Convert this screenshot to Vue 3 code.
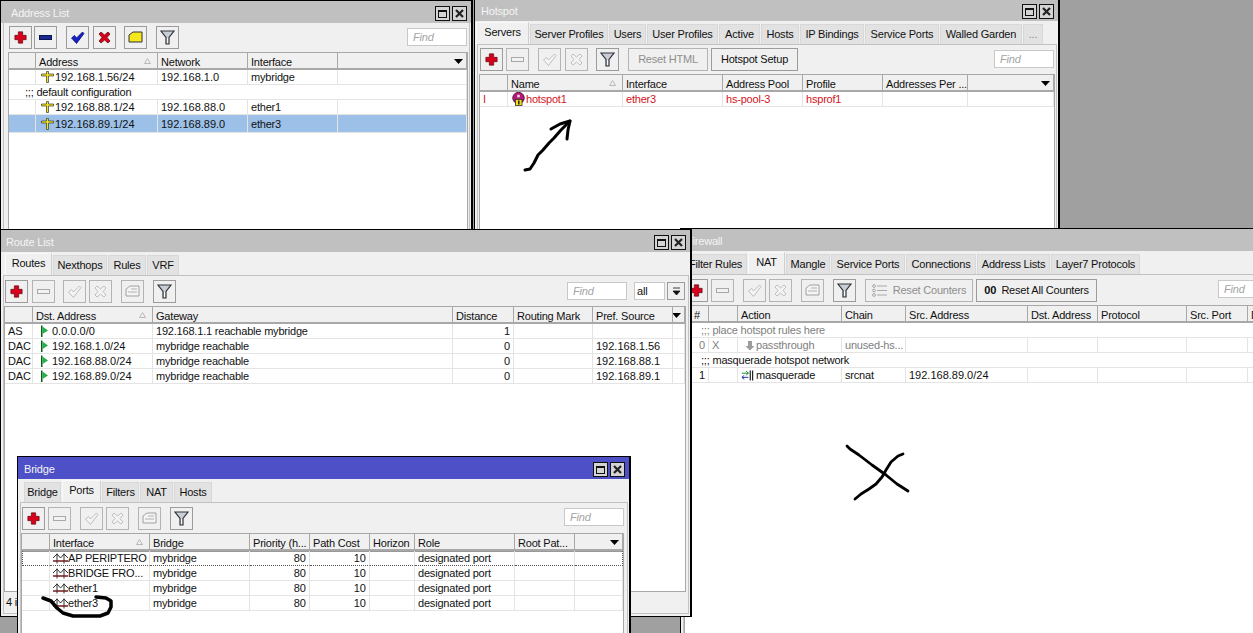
<script setup>
const dis = (icon, gap) => ({ icon, on: false, gap })
const on = (icon, gap) => ({ icon, on: true, gap })
const T = (t, icon) => ({ t, icon })

const windows = [
  {
    id: 'addr', title: 'Address List', x: 0, y: 0, w: 473, h: 260, bar: '#c0c0c0', titleX: 10,
    tools: [on('add', 8), on('minus', 2), on('check', 9), on('cross', 4), on('note', 8), on('filter', 9)],
    tabs: [], find: { r: 4 },
    tableX: 8, colW: [27, 122, 90, 90, 129],
    cols: ['', 'Address', 'Network', 'Interface', ''], sortCol: 1,
    rows: [
      { cells: ['', T('192.168.1.56/24', 'ip'), '192.168.1.0', 'mybridge', ''] },
      { comment: ';;; default configuration' },
      { cells: ['', T('192.168.88.1/24', 'ip'), '192.168.88.0', 'ether1', ''] },
      { cells: ['', T('192.168.89.1/24', 'ip'), '192.168.89.0', 'ether3', ''], sel: true },
    ],
  },
  {
    id: 'hot', title: 'Hotspot', x: 474, y: -2, w: 586, h: 260, bar: '#c0c0c0', titleX: 6,
    tabs: [['Servers', 53], ['Server Profiles', 78], ['Users', 37], ['User Profiles', 71], ['Active', 41], ['Hosts', 38], ['IP Bindings', 64], ['Service Ports', 74], ['Walled Garden', 82], ['...', 20]], tabX: 1, active: 0,
    tools: [on('add', 5), dis('minus', 3), dis('check', 9), dis('cross', 4), on('filter', 8), { label: 'Reset HTML', w: 80, gap: 9, on: false }, { label: 'Hotspot Setup', w: 87, gap: 3, on: true }],
    find: { r: 4 },
    tableX: 5, colW: [28, 115, 100, 80, 80, 85, 86],
    cols: ['', 'Name', 'Interface', 'Address Pool', 'Profile', 'Addresses Per ...', ''], sortCol: 1,
    rows: [{ red: true, cells: ['I', T('hotspot1', 'hs'), 'ether3', 'hs-pool-3', 'hsprof1', '', ''] }],
  },
  {
    id: 'fw', title: 'Firewall', x: 680, y: 228, w: 630, h: 440, bar: '#c0c0c0', titleX: 5, extra: 1,
    tabs: [['Filter Rules', 63], ['NAT', 37], ['Mangle', 44], ['Service Ports', 74], ['Connections', 70], ['Address Lists', 73], ['Layer7 Protocols', 89]], tabX: 3, active: 1,
    tools: [on('add', 4), dis('minus', 3), dis('check', 9), dis('cross', 3), dis('note', 9), on('filter', 9), { label: 'Reset Counters', icon: 'lines', w: 108, gap: 9, on: false }, { label: 'Reset All Counters', icon: 'oo', w: 121, gap: 3, on: true }],
    find: { left: 537 },
    tableX: 4, colW: [24, 29, 104, 64, 122, 70, 89, 61, 60],
    cols: ['#', '', 'Action', 'Chain', 'Src. Address', 'Dst. Address', 'Protocol', 'Src. Port', 'D'], rightCols: [0], headPad: { 0: 9 },
    rows: [
      { comment: ';;; place hotspot rules here', muted: true },
      { muted: true, cells: ['0', 'X', T('passthrough', 'down'), 'unused-hs...', '', '', '', '', ''] },
      { comment: ';;; masquerade hotspot network' },
      { cells: ['1', '', T('masquerade', 'masq'), 'srcnat', '192.168.89.0/24', '', '', '', ''] },
    ],
  },
  {
    id: 'route', title: 'Route List', x: 0, y: 229, w: 692, h: 388, bar: '#c0c0c0', titleX: 5, extra: 1,
    tabs: [['Routes', 47], ['Nexthops', 54], ['Rules', 38], ['VRF', 32]], tabX: 4, active: 0,
    tools: [on('add', 4), dis('minus', 4), dis('check', 8), dis('cross', 3), dis('note', 9), on('filter', 9)],
    find: { left: 566 }, select: true,
    tableX: 4, colW: [28, 120, 300, 61, 79, 80, 12], tableBottom: 25,
    cols: ['', 'Dst. Address', 'Gateway', 'Distance', 'Routing Mark', 'Pref. Source', ''], sortCol: 1, rightCols: [3],
    rows: [
      { cells: ['AS', T('0.0.0.0/0', 'flag'), '192.168.1.1 reachable mybridge', '1', '', '', ''] },
      { cells: ['DAC', T('192.168.1.0/24', 'flag'), 'mybridge reachable', '0', '', '192.168.1.56', ''] },
      { cells: ['DAC', T('192.168.88.0/24', 'flag'), 'mybridge reachable', '0', '', '192.168.88.1', ''] },
      { cells: ['DAC', T('192.168.89.0/24', 'flag'), 'mybridge reachable', '0', '', '192.168.89.1', ''] },
    ],
    status: '4 items',
  },
  {
    id: 'bridge', title: 'Bridge', x: 17, y: 456, w: 614, h: 220, bar: '#4e50c8', titleX: 6, extra: 1,
    tabs: [['Bridge', 37], ['Ports', 39], ['Filters', 37], ['NAT', 33], ['Hosts', 38]], tabX: 6, active: 1,
    tools: [on('add', 4), dis('minus', 3), dis('check', 9), dis('cross', 3), dis('note', 9), on('filter', 9)],
    find: { r: 5 },
    tableX: 4, colW: [28, 100, 100, 60, 60, 45, 100, 60, 48],
    cols: ['', 'Interface', 'Bridge', 'Priority (h...', 'Path Cost', 'Horizon', 'Role', 'Root Pat...', ''], sortCol: 1, rightCols: [3, 4],
    rows: [
      { focus: true, cells: ['', T('AP PERIPTERO', 'br'), 'mybridge', '80', '10', '', 'designated port', '', ''] },
      { cells: ['', T('BRIDGE FRO...', 'br'), 'mybridge', '80', '10', '', 'designated port', '', ''] },
      { cells: ['', T('ether1', 'br'), 'mybridge', '80', '10', '', 'designated port', '', ''] },
      { cells: ['', T('ether3', 'br'), 'mybridge', '80', '10', '', 'designated port', '', ''] },
    ],
  },
]
const cellText = c => (typeof c === 'string' ? c : c.t)
const cellIcon = c => (typeof c === 'string' ? null : c.icon)
const isNum = c => /^[\d./]+$/.test(cellText(c))
</script>

<template>
  <div class="desk">
    <section
      v-for="w in windows" :key="w.id" class="win"
      :style="{ left: w.x + 'px', top: w.y + 'px', width: w.w + 'px', height: w.h + 'px' }"
    >
      <header class="bar" :style="{ background: w.bar, paddingLeft: w.titleX + 'px' }">
        <span class="bar-title">{{ w.title }}</span>
        <span class="bar-btn"><i class="sq"></i></span>
        <span class="bar-btn"><svg width="11" height="11" viewBox="0 0 11 11"><path d="M2 2l7 7M9 2l-7 7" stroke="#222" stroke-width="2.2" /></svg></span>
      </header>

      <nav v-if="w.tabs.length" class="tabs" :style="{ paddingLeft: w.tabX + 'px' }">
        <span
          v-for="(t, i) in w.tabs" :key="t[0]" class="tab" :class="{ active: i === w.active, last: t[0] === '...' }"
          :style="{ width: t[1] + 'px' }"
        >{{ t[0] }}</span>
      </nav>

      <div class="page">
        <div class="tools" :style="w.extra ? { height: 30 + w.extra + 'px', paddingTop: 3 + w.extra + 'px' } : null">
          <button v-for="(b, i) in w.tools" :key="i" class="tool" :class="{ off: !b.on }" :style="{ marginLeft: b.gap + 'px', width: b.w ? b.w + 'px' : null }">
            <svg v-if="b.icon === 'add'" width="13" height="13" viewBox="0 0 15 15"><path d="M5 1h5v4h4v5h-4v4H5v-4H1V5h4z" fill="#d9001c" stroke="#5a0d12" stroke-width=".8" /></svg>
            <svg v-else-if="b.icon === 'minus'" width="15" height="15" viewBox="0 0 15 15"><rect x="1.5" y="5.5" width="12" height="4" :fill="b.on ? '#1a2a8c' : '#f2f2f2'" :stroke="b.on ? '#0c1656' : '#a8a8a8'" /></svg>
            <svg v-else-if="b.icon === 'check'" width="15" height="15" viewBox="0 0 15 15">
              <path d="M1.5 8l3-2.5 2 2.5 6-6 1.5 1.5-7.5 10z" :fill="b.on ? '#1620c8' : '#f4f4f4'" :stroke="b.on ? '#0c1270' : '#b0b0b0'" stroke-width=".8" />
            </svg>
            <svg v-else-if="b.icon === 'cross'" width="15" height="15" viewBox="0 0 15 15">
              <path d="M2 4l2-2 3.500 3L11 2l2 2-3 3.500 3 3.500-2 2-3.500-3L4 13l-2-2 3-3.500z" :fill="b.on ? '#d9001c' : '#f4f4f4'" :stroke="b.on ? '#6a0d12' : '#b0b0b0'" stroke-width=".8" />
            </svg>
            <svg v-else-if="b.icon === 'note'" width="15" height="15" viewBox="0 0 15 15">
              <path d="M1 5l4-3h9v10H1z" :fill="b.on ? '#f6e61e' : '#f4f4f4'" :stroke="b.on ? '#333' : '#a0a0a0'" />
              <path v-if="!b.on" d="M6 5h6M3 8h9" stroke="#b0b0b0" />
            </svg>
            <svg v-else-if="b.icon === 'filter'" width="15" height="15" viewBox="0 0 15 15">
              <path d="M1 1h13L9 7.500V14H6V7.500z" fill="#c9ced6" stroke="#30343a" stroke-width="1.200" />
              <path d="M7.600 8v5" stroke="#fff" />
            </svg>
            <svg v-if="b.icon === 'lines'" class="lead" width="16" height="13" viewBox="0 0 16 13">
              <path d="M5 2h10M5 6.500h10M5 11h10" stroke="#a8a8a8" /><circle cx="2" cy="2" r="1.400" fill="none" stroke="#a8a8a8" /><circle cx="2" cy="6.500" r="1.400" fill="none" stroke="#a8a8a8" /><circle cx="2" cy="11" r="1.400" fill="none" stroke="#a8a8a8" />
            </svg>
            <b v-if="b.icon === 'oo'" class="lead oo">00</b>
            <span v-if="b.label">{{ b.label }}</span>
          </button>
          <div class="tool-end" :class="{ low: w.select }" :style="w.find.left ? { left: w.find.left + 'px' } : { right: w.find.r + 'px' }">
            <span class="find">Find</span>
            <template v-if="w.select">
              <span class="sel">all</span>
              <span class="sel-arrow"><svg width="9" height="9" viewBox="0 0 9 9"><path d="M1 1h7M1 4h7L4.500 8z" stroke="#111" fill="#111" stroke-width=".8" /></svg></span>
            </template>
          </div>
        </div>

        <div class="grid-wrap" :style="{ marginLeft: w.tableX + 'px', width: w.colW.reduce((a, b) => a + b, 0) + 'px', marginBottom: (w.tableBottom || 0) + 'px' }">
          <table class="grid">
            <colgroup><col v-for="(c, i) in w.colW" :key="i" :style="{ width: c + 'px' }"></colgroup>
            <thead>
              <tr>
                <th v-for="(c, i) in w.cols" :key="i" :style="w.headPad && w.headPad[i] ? { paddingLeft: w.headPad[i] + 'px' } : null">
                  {{ c }}
                  <svg v-if="i === w.sortCol" class="sort" width="7" height="6" viewBox="0 0 7 6"><path d="M0.500 5.500h6L3.500 0.500z" fill="none" stroke="#b8b8b8" /></svg>
                  <svg v-if="i === w.cols.length - 1 && c === ''" class="menu" width="9" height="5" viewBox="0 0 9 5"><path d="M0 0h9L4.500 5z" fill="#000" /></svg>
                </th>
              </tr>
            </thead>
            <tbody>
              <tr v-for="(r, ri) in w.rows" :key="ri" :class="{ sel: r.sel, red: r.red, muted: r.muted, focus: r.focus, note: r.comment }">
                <td v-if="r.comment" :colspan="w.cols.length" class="comment"><span class="cell">{{ r.comment }}</span></td>
                <template v-else>
                  <td v-for="(c, ci) in r.cells" :key="ci" :class="{ right: w.rightCols && w.rightCols.includes(ci), num: isNum(c) }">
                    <span class="cell">
                      <svg v-if="cellIcon(c) === 'ip'" class="i-ip" width="13" height="12" viewBox="0 0 13 12"><path d="M5.500 0.500h2v2.500h5v2h-5v6.500h-2V5h-5V3h5z" fill="#f3e51e" stroke="#333" stroke-width=".7" /></svg>
                      <svg v-else-if="cellIcon(c) === 'hs'" class="i-hs" width="13" height="14" viewBox="0 0 13 14"><circle cx="6.500" cy="6" r="5.700" fill="#b41a78" stroke="#5a1040" /><circle cx="6.500" cy="4" r="1.600" fill="#f2c6e0" /><rect x="3.500" y="7.500" width="6.500" height="6" fill="#f5df1c" stroke="#333" stroke-width=".8" /><path d="M6.800 8.500v4" stroke="#222" stroke-width="1.500" /></svg>
                      <svg v-else-if="cellIcon(c) === 'flag'" class="i-flag" width="12" height="12" viewBox="0 0 12 12"><path d="M1 0.500h1.500V12H1z" fill="#0c5a1c" /><path d="M2.500 1.500L8 5.500 2.500 9z" fill="#26b04a" /></svg>
                      <svg v-else-if="cellIcon(c) === 'br'" class="i-br" width="15" height="11" viewBox="0 0 15 11"><path d="M0 8h15" stroke="#7a1a1a" stroke-width="1.500" /><path d="M4 0.500v10M11 0.500v10M0 5L4 1 7.500 5 11 1 15 5" stroke="#333" fill="none" /></svg>
                      <svg v-else-if="cellIcon(c) === 'down'" class="i-down" width="10" height="11" viewBox="0 0 10 11"><path d="M3 1h4v5h2.500L5 10.500.5 6H3z" fill="#9c9c9c" /></svg>
                      <svg v-else-if="cellIcon(c) === 'masq'" class="i-masq" width="13" height="11" viewBox="0 0 14 11"><path d="M1 3h7M5.500 0.800L8 3 5.500 5.200" stroke="#0a8a2a" fill="none" /><path d="M8 7.500H1M3.500 5.300L1 7.500 3.500 9.700" stroke="#1a2ab0" fill="none" /><path d="M10 0v11M12.500 0v11" stroke="#222" stroke-width="1.300" /></svg>
                      {{ cellText(c) }}
                    </span>
                  </td>
                </template>
              </tr>
            </tbody>
          </table>
        </div>
        <footer v-if="w.status" class="status">{{ w.status }}</footer>
      </div>
    </section>

    <svg class="ink" width="1253" height="633" viewBox="0 0 1253 633">
      <g fill="none" stroke="#000" stroke-linecap="round" stroke-linejoin="round">
        <path stroke-width="3" d="M525 170l5-1 4-6 4-8 5-5 6-7 5-5 7-8 9-9" />
        <path stroke-width="3" d="M551 129l9-5 10-3-2 9-1 9" />
        <path stroke-width="2.800" d="M847 446l3 3 9 6 13 10 14 10 11 9 11 7" />
        <path stroke-width="2.800" d="M855 499l6-5 8-5 7-5 6-7 4-7 5-8 7-6 5-2" />
        <path stroke-width="3.500" d="M43 598l8 3 6 7 6 5 10 3h27l8-3 3-6v-6l-5-3-10-1" />
      </g>
    </svg>
  </div>
</template>

<style>
html, body { margin: 0; background: #a0a0a0; overflow: hidden; }
</style>

<style scoped>
.desk { position: relative; width: 1253px; height: 633px; overflow: hidden; background: #a0a0a0; font: 11px/13px "Liberation Sans", Arial, sans-serif; letter-spacing: -.2px; color: #111; }
.win { position: absolute; isolation: isolate; box-sizing: border-box; border: 1px solid #000; border-width: 1px 2px 1px 1px; background: #f0f0f0; display: flex; flex-direction: column; }
.bar { height: 22px; flex: none; box-sizing: border-box; display: flex; align-items: center; padding: 3px 4px 0 5px; gap: 2px; color: #f4f4f4; }
.bar-title { flex: 1; }
.bar-btn { width: 15px; height: 15px; box-sizing: border-box; border: 1px solid #111; background: #d4d4d4; display: flex; align-items: center; justify-content: center; }
.sq { width: 9px; height: 8px; border: 1px solid #111; box-sizing: border-box; border-top-width: 2px; }
.tabs { display: flex; height: 24px; box-sizing: border-box; flex: none; align-items: flex-end; border-bottom: 1px solid #fafafa; }
.tab { box-sizing: border-box; height: 20px; line-height: 19px; text-align: center; background: #e2e2e2; border: 1px solid #d8d8d8; border-bottom: 0; margin-right: 1px; white-space: nowrap; }
.tab.active { height: 23px; line-height: 19px; background: #f0f0f0; border-color: #fafafa #cfcfcf transparent #fafafa; margin-bottom: -1px; padding-bottom: 2px; }
.tab.last { color: #888; }
.page { flex: 1; min-height: 0; position: relative; display: flex; flex-direction: column; }
.page::after { content: ""; position: absolute; inset: -1px 1px 2px 2px; border: 1px solid #c2c2c2; pointer-events: none; }
.tools { position: relative; display: flex; align-items: flex-start; height: 30px; box-sizing: border-box; flex: none; padding-top: 3px; }
.tool { box-sizing: border-box; width: 23px; height: 23px; padding: 0; margin: 0; display: inline-flex; align-items: center; justify-content: center; gap: 5px; background: #f0f0f0; border: 1px solid #9c9c9c; font: inherit; letter-spacing: inherit; color: #111; }
.tool.off { color: #8e8e8e; border-color: #b4b4b4; }
.lead { flex: none; }
.oo { font: bold 11px/11px "Liberation Sans", Arial, sans-serif; letter-spacing: 0; }
.tool-end { position: absolute; top: 5px; display: flex; gap: 7px; align-items: center; }
.tool-end.low { top: 6px; }
.find { box-sizing: border-box; width: 60px; height: 18px; line-height: 16px; border: 1px solid #c8c8c8; background: #fff; color: #a4a4a4; font-style: italic; padding-left: 5px; }
.sel { box-sizing: border-box; width: 31px; height: 18px; line-height: 16px; background: #fff; border: 1px solid #c8c8c8; padding-left: 2px; margin-right: -5px; }
.sel-arrow { width: 18px; height: 18px; box-sizing: border-box; border: 1px solid #9c9c9c; display: flex; align-items: center; justify-content: center; }
.grid-wrap { flex: 1; min-height: 0; position: relative; z-index: 1; background: #fff; outline: 1px solid #a8a8a8; overflow: hidden; }
.grid { table-layout: fixed; border-collapse: separate; border-spacing: 0; width: 100%; }
th { position: relative; box-sizing: border-box; height: 17px; padding: 3px 0 0 3px; line-height: 12px; font-weight: 400; text-align: left; background: #f0f0f0; border: 1px solid #a8a8a8; border-width: 0 1px 2px 0; white-space: nowrap; overflow: hidden; }
.sort { position: absolute; right: 6px; top: 5px; }
.menu { position: absolute; right: 3px; top: 6px; }
td { box-sizing: border-box; height: 15px; padding: 0 0 0 3px; border: 1px solid #e4e4e4; border-width: 0 1px 1px 0; white-space: nowrap; overflow: hidden; background: #fff; }
td.right { text-align: right; padding-right: 3px; }
td.num { letter-spacing: 0; }
.cell { display: flex; align-items: center; height: 14px; line-height: 14px; }
td.right .cell { justify-content: flex-end; }
.i-ip { flex: none; margin: 0 1px 0 2px; }
.i-hs { flex: none; margin: 0 1px 0 1px; }
.i-flag { flex: none; margin-left: 4px; }
.i-br { flex: none; }
.i-down { flex: none; margin: 0 1px 0 4px; }
.i-masq { flex: none; margin-right: 2px; }
tr.sel td { background: #9cc0e8; }
tr.red td { color: #d4141c; }
tr.muted td { color: #808080; }
tr.focus td { border-bottom: 1px dotted #555; box-shadow: inset 0 1px 0 #999; }
tr.focus td:first-child { border-left: 1px dotted #555; }
tr.focus td:last-child { border-right: 1px dotted #555; }
tr.note td { padding-left: 16px; }
.status { position: absolute; left: 5px; bottom: 4px; height: 20px; line-height: 20px; }
.ink { position: absolute; left: 0; top: 0; pointer-events: none; }
</style>
